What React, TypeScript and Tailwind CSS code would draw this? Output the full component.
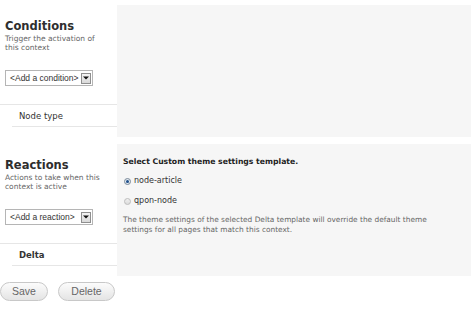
import React from "react";

const sans = "font-['DejaVu_Sans',Verdana,sans-serif]";
const arial = "font-['Liberation_Sans',Arial,sans-serif]";

function FakeSelect({ label }: { label: string }) {
  return (
    <div className={`ml-[5px] flex h-[16px] w-[88px] items-center border border-[#b5b5b5] bg-white ${arial}`}>
      <span className="flex-1 whitespace-nowrap pl-[4px] text-[8.5px] leading-[14px] text-[#333]">
        {label}
      </span>
      <span className="mr-[1px] flex h-[11px] w-[10px] items-center justify-center border border-[#8f8f8f] bg-gradient-to-b from-[#f4f4f4] to-[#d9d9d9]">
        <svg width="6" height="4" viewBox="0 0 6 4">
          <path d="M0 0.5h6L3 3.5z" fill="#111" />
        </svg>
      </span>
    </div>
  );
}

function SideBlock({
  title,
  lines,
  select,
  item,
  bold,
}: {
  title: string;
  lines: string[];
  select: string;
  item: string;
  bold?: boolean;
}) {
  return (
    <div className={`flex w-[117px] shrink-0 flex-col ${sans}`}>
      <h2 className="pl-[5px] pt-[14px] text-[11.5px] font-bold leading-[14px] text-[#2e2e2e]">
        {title}
      </h2>
      <p className="mt-[1px] pl-[5px] text-[7.5px] leading-[9px] text-[#666]">
        {lines[0]}
        <br />
        {lines[1]}
      </p>
      <div className="mt-[18px]">
        <FakeSelect label={select} />
      </div>
      <div className="mt-[18px] h-px bg-[#e6e6e6]" />
      <div className="ml-[12px] flex h-[22px] items-center border-b border-[#e6e6e6] pl-[7px]">
        <span
          className={`text-[8.5px] leading-[10px] text-[#333] ${bold ? "font-bold" : ""}`}
        >
          {item}
        </span>
      </div>
    </div>
  );
}

function Radio({ checked, label }: { checked?: boolean; label: string }) {
  return (
    <div className="flex h-[10px] items-center gap-[3px] pl-[1px]">
      {checked ? (
        <span className="flex h-[7px] w-[7px] items-center justify-center rounded-full border border-[#7c8a99] bg-[#dfe7ef]">
          <span className="h-[3px] w-[3px] rounded-full bg-[#1f4f8a]" />
        </span>
      ) : (
        <span className="h-[7px] w-[7px] rounded-full border border-[#bdbdbd] bg-gradient-to-b from-[#f0f0f0] to-[#dcdcdc]" />
      )}
      <span className="text-[8px] leading-[10px] text-[#333]">{label}</span>
    </div>
  );
}

export default function App() {
  return (
    <div className="h-[311px] w-[474px] overflow-hidden bg-white pt-[5px]">
      {/* Conditions */}
      <div className="flex h-[132px]">
        <SideBlock
          title="Conditions"
          lines={["Trigger the activation of", "this context"]}
          select="<Add a condition>"
          item="Node type"
        />
        <div className="mr-[3px] flex-1 bg-[#f6f6f6]" />
      </div>

      {/* Reactions */}
      <div className="mt-[7px] flex h-[132px]">
        <SideBlock
          title="Reactions"
          lines={["Actions to take when this", "context is active"]}
          select="<Add a reaction>"
          item="Delta"
          bold
        />
        <div className={`mr-[3px] flex-1 bg-[#f6f6f6] px-[6px] pt-[13px] ${sans}`}>
          <h3 className="text-[7.7px] font-bold leading-[10px] text-[#222]">
            Select Custom theme settings template.
          </h3>
          <div className="mt-[9px] flex flex-col gap-[10px]">
            <Radio checked label="node-article" />
            <Radio label="qpon-node" />
          </div>
          <p className="mt-[9px] text-[7.4px] leading-[10px] text-[#666]">
            The theme settings of the selected Delta template will override the default theme
            <br />
            settings for all pages that match this context.
          </p>
        </div>
      </div>

      {/* Actions */}
      <div className={`mt-[6px] flex gap-[10px] ${arial}`}>
        <button className="h-[19px] w-[48px] rounded-full border border-[#c8c8c8] bg-gradient-to-b from-[#fcfcfc] to-[#e4e4e4] text-[10.5px] text-[#666]">
          Save
        </button>
        <button className="h-[19px] w-[57px] rounded-full border border-[#c8c8c8] bg-gradient-to-b from-[#fcfcfc] to-[#e4e4e4] text-[10.5px] text-[#666]">
          Delete
        </button>
      </div>
    </div>
  );
}
